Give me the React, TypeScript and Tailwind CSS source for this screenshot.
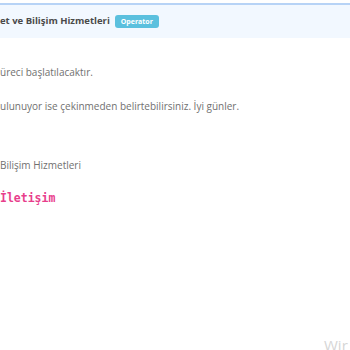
export default function App() {
  return (
    <div className="relative h-[350px] w-[350px] overflow-hidden bg-white font-['Open_Sans',sans-serif]">
      <div className="mt-[3px] flex h-[35px] items-center gap-[5px] border-t-2 border-[#b7d3f6] bg-[#f2f8ff]">
        <span className="text-[9.5px] font-bold text-[#4a4a4a]">et ve Bilişim Hizmetleri</span>
        <span className="rounded-[3px] bg-[#5bc0de] px-[6px] py-[2px] text-[7px] font-bold leading-[9px] text-white">
          Operator
        </span>
      </div>

      <div className="text-[10px] text-[#707070]">
        <p className="mt-[27px] leading-[14px]">üreci başlatılacaktır.</p>
        <p className="mt-[20px] leading-[14px]">ulunuyor ise çekinmeden belirtebilirsiniz. İyi günler.</p>
        <p className="mt-[45px] leading-[14px]">Bilişim Hizmetleri</p>
        <p className="mt-[19px] font-['DejaVu_Sans_Mono',monospace] text-[11.5px] font-bold leading-[14px] text-[#e83e8c]">
          İletişim
        </p>
      </div>

      <span className="absolute left-[324px] top-[334px] text-[15px] text-[#d6d6d6]">Wir</span>
    </div>
  );
}
